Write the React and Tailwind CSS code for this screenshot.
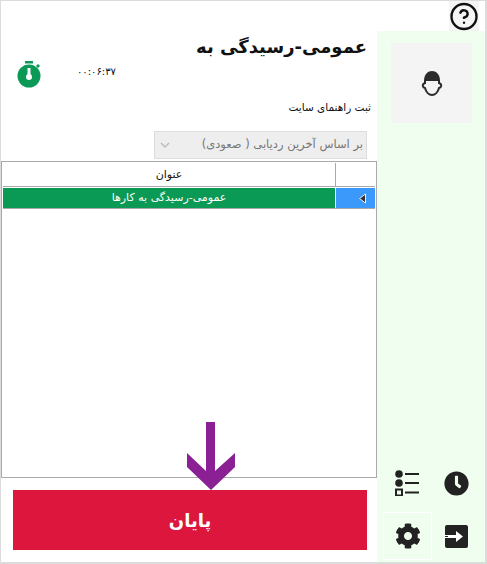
import React from 'react';
import { CircleHelp } from 'lucide-react';
import { FaClock, FaCog } from 'react-icons/fa';

const font = { fontFamily: '"DejaVu Sans", sans-serif' };

const Helmet = () => (
  <svg width="24" height="28" viewBox="0 0 24 28">
    <path d="M4 12 C4 5 8 2 12 2 C16 2 20 5 20 12 Z" fill="#2b2b2b" />
    <path d="M5 11 L5 14 C2 15 2 18 5 19 C6 23 9 26 12 26 C15 26 18 23 19 19 C22 18 22 15 19 14 L19 11" fill="none" stroke="#2b2b2b" strokeWidth="2" />
  </svg>
);

const Stopwatch = () => (
  <svg width="24" height="27" viewBox="0 0 24 27">
    <rect x="8" y="0" width="8" height="2.5" fill="#0a9a55" />
    <path d="M19 5 L21 3 L23 5 L21 7 Z" fill="#0a9a55" />
    <circle cx="12" cy="15" r="11.5" fill="#0a9a55" />
    <rect x="10.5" y="7" width="3" height="8" fill="#fff" />
    <circle cx="12" cy="16" r="3" fill="#fff" />
  </svg>
);

const ListIcon = () => (
  <svg width="24" height="26" viewBox="0 0 24 26">
    <circle cx="4" cy="4" r="3.8" fill="#222" />
    <circle cx="4" cy="13" r="3.8" fill="#222" />
    <rect x="1" y="19.5" width="6" height="6" fill="none" stroke="#222" strokeWidth="2" />
    <rect x="10" y="3" width="14" height="2" fill="#222" />
    <rect x="10" y="12" width="14" height="2" fill="#222" />
    <rect x="10" y="21.5" width="14" height="2" fill="#222" />
  </svg>
);

const EnterIcon = () => (
  <svg width="23" height="23" viewBox="0 0 23 23">
    <rect width="23" height="23" rx="2" fill="#222" />
    <path d="M0 10 H11 V6 L18 11.5 L11 17 V13 H0 Z" fill="#fff" />
    <path d="M0 11 H3 V12 H0 Z" fill="#222" />
  </svg>
);

const Arrow = () => (
  <svg width="48" height="68" viewBox="0 0 48 68">
    <path d="M19 0 H28 V49 L48 31 V45 L24 68 L0 45 V31 L19 49 Z" fill="#8b2094" />
  </svg>
);

export default function App() {
  return (
    <div style={font} className="relative flex h-[564px] w-[487px] border-y-2 border-l border-r-2 border-t-[1px] border-[#dcdcdc] bg-white text-[#111]">
      <div dir="rtl" className="flex w-[376px] flex-col">
        <div className="flex h-[160px] flex-col pr-[10px]">
          <h1 className="mt-[32px] h-[28px] text-[18px] font-bold leading-[28px]">عمومی-رسیدگی به</h1>
          <div dir="ltr" className="flex h-[38px] items-start pl-[16px]">
            <Stopwatch />
            <span className="ml-[36px] mt-[3px] text-[10px] tracking-[1.5px]">۰۰:۰۶:۳۷</span>
          </div>
          <p className="-mr-[4px] text-[10.5px] leading-[16px]">ثبت راهنمای سایت</p>
          <div className="mt-[16px] flex h-[28px] w-[213px] items-center justify-between border border-[#ddd] bg-[#eeeeee] px-[3px] text-[11.5px] text-[#777]">
            <span>بر اساس آخرین ردیابی ( صعودی)</span>
            <svg width="10" height="7" viewBox="0 0 10 7" className="ml-[2px]"><path d="M1 1 L5 5 L9 1" fill="none" stroke="#bbb" strokeWidth="1.5" /></svg>
          </div>
        </div>
        <div className="h-[317px] border border-[#aaa] p-[1px] pr-[1px]">
          <div className="flex h-[24px] border-b border-[#aaa]">
            <div className="w-[40px] border-l border-[#aaa]" />
            <div className="flex-1 text-center text-[11px] leading-[23px]">عنوان</div>
          </div>
          <div className="flex h-[22px] border-b border-[#aaa] pt-[1px]">
            <div className="flex w-[40px] items-center border-l border-white bg-[#3b99fc] pr-[1px]">
              <svg width="9" height="11" viewBox="0 0 9 11" className="mr-auto ml-[22px] rotate-0"><path d="M7.5 1 L1.5 5.5 L7.5 10 Z" fill="#333" stroke="#eee" strokeWidth="1" /></svg>
            </div>
            <div className="flex-1 bg-[#0a9a55] text-center text-[11px] leading-[20px] text-white">عمومی-رسیدگی به کارها</div>
          </div>
        </div>
        <div className="mr-[10px] ml-[12px] mt-[12px] flex h-[60px] items-center justify-center bg-[#dc163c] text-[18px] font-bold text-white">پایان</div>
      </div>
      <div className="flex w-[108px] flex-col">
        <div className="flex h-[30px] justify-end pr-[6px]">
          <div className="flex w-[30px] items-center justify-center bg-[#f5f5f5]">
            <CircleHelp size={33} strokeWidth={1.9} color="#111" />
          </div>
        </div>
        <div className="flex flex-1 flex-col bg-[#effeef] pb-[2px]">
          <div className="ml-[14px] mr-[13px] mt-[12px] flex h-[80px] items-center justify-center bg-[#f4f4f4]">
            <Helmet />
          </div>
          <div className="mt-auto grid grid-cols-2 pl-[6px] pr-[4px]">
            <div className="flex h-[58px] items-center justify-center pr-[2px]"><ListIcon /></div>
            <div className="flex h-[58px] items-center justify-center"><FaClock size={25} color="#222" /></div>
            <div className="flex h-[48px] items-center justify-center border border-white"><FaCog size={26} color="#222" /></div>
            <div className="flex h-[48px] items-center justify-center"><EnterIcon /></div>
          </div>
        </div>
      </div>
      <div className="absolute left-[186px] top-[421px]"><Arrow /></div>
    </div>
  );
}
